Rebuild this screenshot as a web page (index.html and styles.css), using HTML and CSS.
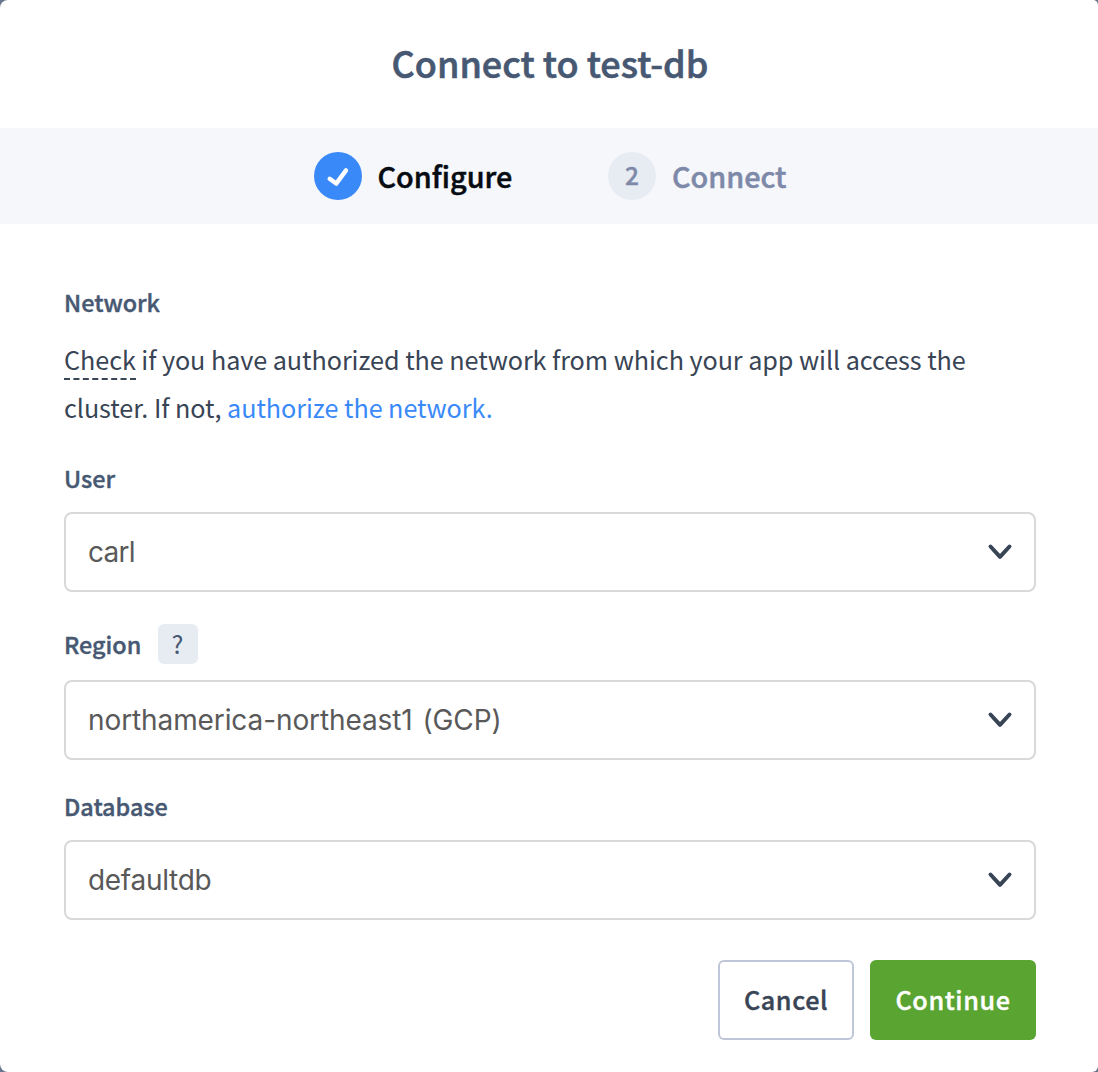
FILE: index.html
```html
<!DOCTYPE html>
<html lang="en">
<head>
<meta charset="utf-8">
<title>Connect to test-db</title>
<link rel="stylesheet" href="styles.css">
</head>
<body>
<main class="modal">
  <header class="header"><h1 class="title">Connect to test-db</h1></header>
  <nav class="steps">
    <div class="step">
      <span class="badge badge-done"><svg width="48" height="48" viewBox="0 0 48 48"><path d="M15.7 26.8 L22.2 31.6 L32 18.4" fill="none" stroke="#fff" stroke-width="4.4" stroke-linecap="round" stroke-linejoin="round"/></svg></span>
      <span class="step-name name-done">Configure</span>
    </div>
    <div class="step">
      <span class="badge"><span class="number">2</span></span>
      <span class="step-name name-next">Connect</span>
    </div>
  </nav>
  <section class="content">
    <h2 class="label network">Network</h2>
    <p class="text"><span class="check">Check</span> if you have authorized the network from which your app will access the<br>cluster. If not, <a class="link">authorize the network.</a></p>
    <div class="label user">User</div>
    <div class="select"><span class="value carl">carl</span><svg class="chevron" width="28" height="20" viewBox="0 0 28 20"><path d="M4.5 4.5 L14 14.8 L23.5 4.5" fill="none" stroke="#394455" stroke-width="4" stroke-linecap="round" stroke-linejoin="round"/></svg></div>
    <div class="label region"><span class="region-name">Region</span><span class="help">?</span></div>
    <div class="select"><span class="value place">northamerica-northeast1 (GCP)</span><svg class="chevron" width="28" height="20" viewBox="0 0 28 20"><path d="M4.5 4.5 L14 14.8 L23.5 4.5" fill="none" stroke="#394455" stroke-width="4" stroke-linecap="round" stroke-linejoin="round"/></svg></div>
    <div class="label database">Database</div>
    <div class="select"><span class="value db">defaultdb</span><svg class="chevron" width="28" height="20" viewBox="0 0 28 20"><path d="M4.5 4.5 L14 14.8 L23.5 4.5" fill="none" stroke="#394455" stroke-width="4" stroke-linecap="round" stroke-linejoin="round"/></svg></div>
    <footer class="actions">
      <button class="button cancel">Cancel</button>
      <button class="button continue">Continue</button>
    </footer>
  </section>
</main>
</body>
</html>
```
FILE: styles.css
```css
* { box-sizing: border-box; }
body {
  margin: 0;
  background: #68758c;
  font-family: "Noto Sans CJK SC", sans-serif;
  font-weight: 500;
  white-space: nowrap;
}
.modal {
  height: 1072px;
  background: #fff;
  border-radius: 8px 5px 6px 8px;
  overflow: hidden;
}
.header { height: 128px; padding: 32px 0 0 2px; }
.title {
  margin: 0;
  font-size: 36px;
  line-height: 60px;
  font-weight: 500;
  text-align: center;
  color: #475872;
  -webkit-text-stroke: 0.6px;
}
.steps {
  display: flex;
  gap: 96px;
  height: 96px;
  padding: 24px 0 0 314px;
  background: #f5f7fa;
}
.step { display: flex; gap: 16px; height: 48px; }
.badge {
  display: flex;
  justify-content: center;
  width: 48px;
  height: 48px;
  border-radius: 50%;
  background: #e7ecf3;
}
.badge-done { background: #3a89f9; }
.number { font-size: 24.5px; line-height: 45px; color: #7e89a9; -webkit-text-stroke: 0.4px; }
.step-name { font-size: 28.8px; line-height: 48px; -webkit-text-stroke: 0.5px; }
.name-done { width: 134px; margin-left: -0.5px; margin-right: 0.5px; color: #060c12; }
.name-next { color: #7e89a9; }
.content { padding: 0 62px 0 64px; }
.label { font-size: 23.4px; color: #475872; -webkit-text-stroke: 0.4px; }
.network { margin: 0; padding-top: 61px; height: 111px; line-height: 34px; font-weight: 500; }
.text {
  margin: 0;
  height: 96px;
  font-size: 25.2px;
  line-height: 48px;
  font-weight: 400;
  letter-spacing: -0.06px;
  color: #394455;
}
.check { padding-bottom: 1px; border-bottom: 2px dashed #394455; }
.link { color: #3a89f9; }
.user { height: 81px; padding-top: 30px; line-height: 34px; }
.select {
  display: flex;
  align-items: center;
  justify-content: space-between;
  width: 972px;
  height: 80px;
  padding: 0 20px 0 22px;
  border: 2px solid #d9d9d9;
  border-radius: 8px;
}
.value { font-family: Inter, sans-serif; font-size: 28px; font-weight: 400; color: #595959; }
.carl { letter-spacing: -0.7px; }
.place { letter-spacing: -0.1px; word-spacing: 2px; }
.db { letter-spacing: -0.3px; }
.region { display: flex; gap: 17px; height: 88px; padding-top: 32px; line-height: 40px; }
.help {
  width: 40px;
  height: 40px;
  padding-right: 2px;
  border-radius: 6px;
  background: #e7ecf3;
  text-align: center;
  font-size: 25px;
  font-weight: 400;
  line-height: 38px;
  -webkit-text-stroke: 0;
}
.database { height: 80px; padding-top: 29px; line-height: 34px; }
.actions { display: flex; justify-content: flex-end; gap: 16px; padding-top: 40px; }
.button {
  height: 80px;
  padding: 0 0 2px;
  border-radius: 6px;
  font: 500 25.2px/76px "Noto Sans CJK SC", sans-serif;
  letter-spacing: 0.6px;
  -webkit-text-stroke: 0.4px;
}
.cancel { width: 136px; border: 2px solid #c0c6d9; background: #fff; color: #394455; line-height: 74px; }
.continue { width: 166px; border: 0; background: #5aa431; color: #fff; }
```
